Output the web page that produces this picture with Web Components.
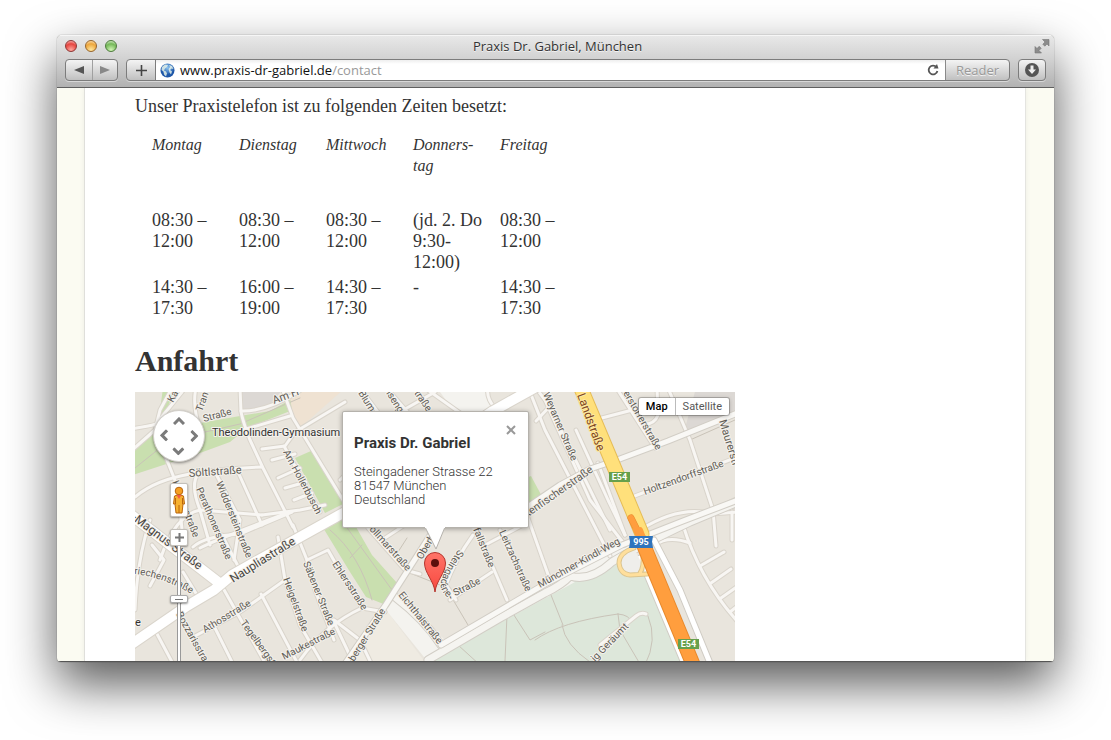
<!DOCTYPE html>
<html lang="de">
<head>
<meta charset="utf-8">
<title>Praxis Dr. Gabriel, München</title>
<style>
  html, body { margin: 0; height: 100%; background: #fff; overflow: hidden; }
  body { box-sizing: border-box; padding: 35px 57px 78px; display: flex; }
</style>
</head>
<body>
<browser-window>
  <window-titlebar slot="title">Praxis Dr. Gabriel, München</window-titlebar>
  <browser-toolbar slot="toolbar" host="www.praxis-dr-gabriel.de" path="/contact"></browser-toolbar>
  <contact-page>
    <p slot="intro">Unser Praxistelefon ist zu folgenden Zeiten besetzt:</p>
    <office-hours slot="hours"></office-hours>
    <span slot="heading">Anfahrt</span>
    <street-map slot="map">
      <map-pan slot="controls"></map-pan>
      <map-zoom slot="controls"></map-zoom>
      <map-types slot="types"></map-types>
      <map-info slot="info">
        <span slot="name">Praxis Dr. Gabriel</span>
        Steingadener Strasse 22<br>81547 München<br>Deutschland
      </map-info>
    </street-map>
  </contact-page>
</browser-window>

<script>
const define = (name, html, setup) => {
  const template = document.createElement('template');
  template.innerHTML = html;
  customElements.define(name, class extends HTMLElement {
    constructor() {
      super();
      this.attachShadow({ mode: 'open' }).append(template.content.cloneNode(true));
    }
    connectedCallback() { if (setup) setup(this, this.shadowRoot); }
  });
};

define('browser-window', `
<style>
  :host { flex: 1; min-width: 0; display: flex; flex-direction: column; border-radius: 5px 5px 4px 4px;
    box-shadow: 0 0 1px 0 rgba(0,0,0,.7), 0 22px 50px rgba(0,0,0,.66); background: #fbfbf2; overflow: hidden;
    font-family: "Open Sans", "Liberation Sans", sans-serif; }
  header { background: linear-gradient(#e9e9e9, #d2d2d2 45%, #b2b2b2); border-bottom: 1px solid #5f5f5f;
    box-shadow: inset 0 1px #f6f6f6; padding-bottom: 6px; }
  main { flex: 1; min-height: 0; overflow: hidden; display: flex; border-bottom: 1px solid #555; }
</style>
<header><slot name="title"></slot><slot name="toolbar"></slot></header>
<main><slot></slot></main>`);

define('window-titlebar', `
<style>
  :host { display: grid; grid-template-columns: 1fr auto 1fr; align-items: center; height: 22px; padding: 0 4px 2px 8px;
    font-size: 13px; color: #333; text-shadow: 0 1px #f4f4f4; }
  .lights { display: flex; gap: 8px; }
  button { appearance: none; width: 12px; height: 12px; padding: 0; border: 1px solid #7a4a40; border-radius: 50%; }
  .close { border-color: #8d3634; background: radial-gradient(circle at 50% 90%, #ffaaa0, #e6453f 60%, #f7aeac 90%); }
  .min { border-color: #96642a; background: radial-gradient(circle at 50% 90%, #ffe8a0, #eda63c 60%, #fbdcaa 90%); }
  .max { border-color: #4d7a3c; background: radial-gradient(circle at 50% 90%, #d4f7b8, #74b858 60%, #cfe9c0 90%); }
  svg { justify-self: end; display: block; }
</style>
<div class="lights">
  <button class="close" aria-label="Schließen"></button>
  <button class="min" aria-label="Minimieren"></button>
  <button class="max" aria-label="Maximieren"></button>
</div>
<span><slot></slot></span>
<svg width="16" height="16" viewBox="0 0 16 16" fill="#8c8c8c" stroke="#777" stroke-width=".6">
  <path d="M8.500 1.500H15V8l-2-2-2.200 2.200-2-2L11 4z"/><path d="M7.500 15H1V8.500l2 2 2.200-2.200 2 2L5 12.500z"/>
</svg>`);

define('browser-toolbar', `
<style>
  :host { display: flex; gap: 8px; padding: 0 8px; }
  button { appearance: none; margin: 0; padding: 0; border: 0; background: none; font: inherit; display: grid; place-items: center; }
  .group { display: flex; box-sizing: border-box; height: 22px; border: 1px solid #7c7c7c; border-radius: 4px;
    background: linear-gradient(#f4f4f4, #c0c0c0); box-shadow: 0 1px rgba(255,255,255,.45); overflow: hidden; }
  .nav button { width: 26px; }
  .nav button + button { border-left: 1px solid #a0a0a0; width: 25px; }
  .address { flex: 1; }
  .add { width: 29px; border-right: 1px solid #7c7c7c; }
  .field { flex: 1; display: flex; align-items: center; padding: 0 6px 0 4px; gap: 5px; background: linear-gradient(#eee, #fff 4px); }
  .url { flex: 1; font-size: 13px; line-height: 20px; color: #999; white-space: nowrap; outline: none; }
  .url b { font-weight: 400; color: #111; }
  .reader { width: 64px; border-left: 1px solid #8a8a8a; font-size: 13px; color: #999; text-shadow: 0 1px #f2f2f2; }
  .load button { width: 26px; }
  svg { display: block; }
</style>
<div class="group nav">
  <button aria-label="Zurück"><svg width="10" height="8"><path d="M10 0v8L0 4z" fill="#555"/></svg></button>
  <button aria-label="Vor"><svg width="10" height="8"><path d="M0 0v8l10-4z" fill="#888"/></svg></button>
</div>
<div class="group address">
  <button class="add" aria-label="Lesezeichen"><svg width="11" height="11"><path d="M5.500 0v11M0 5.500h11" stroke="#444" stroke-width="1.600"/></svg></button>
  <div class="field">
    <svg width="15" height="15" viewBox="0 0 15 15">
      <defs><radialGradient id="g" cy=".3"><stop offset="0" stop-color="#8cc4f2"/><stop offset="1" stop-color="#1d56a8"/></radialGradient></defs>
      <circle cx="7.500" cy="7.500" r="7" fill="url(#g)"/>
      <path d="M2 4l3-2.500 3 .5-1 2-2 1.500-1 2 2 1 1 2-1 3-2-2-.5-3L1.500 7zM9 2l3 1 1.500 3-2-.5L10 7l2 1.500-1 3-1.500-2L8.500 6 10 4z" fill="#e3f0e6" opacity=".85"/>
    </svg>
    <span class="url" role="textbox" aria-label="Adresse"><b></b><span></span></span>
    <svg width="12" height="12" viewBox="0 0 12 12"><path d="M9.500 3.200A4.400 4.400 0 1 0 10.400 7" fill="none" stroke="#555" stroke-width="1.800"/><path d="M6.500 4.500h5L10 0z" fill="#555"/></svg>
  </div>
  <button class="reader">Reader</button>
</div>
<div class="group load">
  <button aria-label="Downloads"><svg width="16" height="16" viewBox="0 0 16 16"><circle cx="8" cy="8" r="7" fill="#555"/><path d="M6.500 3.500h3v4H12l-4 4.500-4-4.500h2.500z" fill="#eee"/></svg></button>
</div>`, (el, root) => {
  root.querySelector('.url b').textContent = el.getAttribute('host');
  root.querySelector('.url span').textContent = el.getAttribute('path');
});

define('contact-page', `
<style>
  :host { flex: 1; margin: 0 28px 0 27px; padding: 8px 50px 0; border-left: 1px solid #dfdfdb; border-right: 1px solid #e4e4e0;
    background: #fff; box-shadow: 0 0 5px rgba(0,0,0,.06); color: #333;
    font: 18px/21px "Liberation Serif", serif; }
  ::slotted(p) { margin: 0 0 17px; }
  h2 { margin: 24px 0 13px; font-size: 30px; line-height: 36px; }
</style>
<slot name="intro"></slot>
<slot name="hours"></slot>
<h2><slot name="heading"></slot></h2>
<slot name="map"></slot>`);

define('office-hours', `
<style>
  :host { display: block; }
  table { border-collapse: collapse; table-layout: fixed; width: 435px; }
  th, td { padding: 0 0 4px 17px; text-align: left; vertical-align: top; font-weight: 400; }
  th { font-size: 16px; font-style: italic; padding-bottom: 34px; }
  tr:last-child td { padding-bottom: 0; }
</style>
<table>
  <thead><tr><th>Montag</th><th>Dienstag</th><th>Mittwoch</th><th>Donners-<br>tag</th><th>Freitag</th></tr></thead>
  <tbody>
    <tr><td>08:30 –<br>12:00</td><td>08:30 –<br>12:00</td><td>08:30 –<br>12:00</td><td>(jd. 2. Do<br>9:30-<br>12:00)</td><td>08:30 –<br>12:00</td></tr>
    <tr><td>14:30 –<br>17:30</td><td>16:00 –<br>19:00</td><td>14:30 –<br>17:30</td><td>-</td><td>14:30 –<br>17:30</td></tr>
  </tbody>
</table>`);

/* Streets are listed once and drawn twice: casing first, surface on top. */
const minor = [
  'M240 388L241 412Q243 422 250 440L263 468L293 527', 'M282 388L293 418L343 500',
  'M130 429Q150 426 156 424L182 392L186 386', 'M130 452L155 430L160 410L172 388',
  'M196 388Q192 405 200 430', 'M165 455L178 488L183 540', 'M135 497Q155 480 190 474T262 467',
  'M241 411Q265 412 298 392L306 386', 'M243 430L290 416', 'M345 402L295 432L285 446L262 449',
  'M295 454L272 460', 'M300 468L278 478', 'M306 482L285 488', 'M312 493L294 500',
  'M284 446L320 512', 'M198 474Q190 485 200 510L210 545', 'M215 472L240 520L234 560', 'M238 472L262 525',
  'M152 545L164 560L150 586', 'M150 520Q137 560 135 610', 'M160 560Q175 515 200 510L262 515', 'M200 548Q215 540 290 512',
  'M183 572L200 600', 'M193 547Q205 536 240 534L292 512', 'M262 515L300 510L325 505',
  'M232 575L240 570L222 535', 'M223 588L268 668', 'M195 636L240 612L285 580', 'M261 594L300 668', 'M278 537L285 580L300 625L325 668',
  'M293 525L307 560L315 590L334 640', 'M307 560L328 550L345 580L362 608L385 612', 'M156 632L172 662L160 668',
  'M215 628L235 668', 'M300 660Q325 625 362 608', 'M333 620L352 660', 'M372 665L360 640L334 620',
  'M340 480L360 460', 'M365 395L380 415', 'M390 392L410 415', 'M435 392L400 412L352 440', 'M425 388L470 420', 'M488 388Q486 398 495 408',
  'M368 528L405 570L420 574', 'M385 538L420 515', 'M473 535Q455 560 446 585L456 600',
  'M450 600L492 572', 'M475 525L507 600', 'M487 544L525 524', 'M500 530L532 595', 'M528 518L550 580',
  'M530 392L545 430L610 556', 'M536 421L552 404', 'M536 388L545 400L590 500L625 545', 'M545 398L610 530', 'M576 430L608 500L625 535',
  'M598 463L625 535', 'M598 419L640 408', 'M619 392L655 448', 'M657 388L658 415Q654 426 640 424', 'M668 388L690 440L713 510',
  'M632 497L735 458', 'M640 530Q680 505 712 514L740 505', 'M713 510L716 546', 'M712 514L740 512', 'M732 512L732 540',
  'M683 525Q700 580 738 622', 'M700 566L724 552', 'M711 583L731 569', 'M721 598L738 586', 'M730 612L740 604',
  'M655 545Q668 535 690 543', 'M645 545L738 498', 'M600 645L636 616Q641 612 646 614'
];
const ramps = ['M428 660L500 618L545 593Q562 585 570 576Q590 582 612 562Q635 548 690 522L738 502', 'M395 597Q425 620 441 645'];
const major = ['M120 652L187 606L214 590L232 575L300 537L345 512L493 411L545 382', 'M130 514L218 582'];
const middle = ['M342 668L385 606L440 520L465 480', 'M441 645L545 584L622 545L683 521L738 500', 'M520 512L560 485L590 469L617 460L668 441L740 412'];
const slips = ['M640 558L686 668', 'M654 540L680 590L712 668'];
const footways = ['M549 590L563 625', 'M535 640Q560 622 618 614', 'M562 625Q565 645 590 662', 'M618 614L620 630L640 664',
  'M618 614Q630 615 631 622', 'M648 616Q658 640 645 665',
  'M452 598L468 625', 'M410 573L440 585', 'M398 552L407 538', 'M505 661L507 615L512 612L530 640L545 632', 'M458 645L480 665',
  'M135 468L170 440L240 424L300 398', 'M330 530Q360 555 372 600', 'M345 525L392 590', 'M350 558L362 545', 'M690 440L735 420'];

/* [text, x, y, angle, style] */
const labels = [
  ['Ka', 173, 403, -62], ['Tran', 202, 412, -70], ['Straße', 204, 422, -15], ['Am H', 274, 404, -20, 'mid'],
  ['Theodolinden-Gymnasium', 212, 436, 0, 'mid poi'], ['Söltlstraße', 189, 477, -4, 'mid'], ['Am Hollerbusch', 283, 452, 62],
  ['Perathonerstraße', 196, 489, 67], ['Widdersteinstraße', 216, 483, 68], ['Kanderstraße', 172, 482, 69],
  ['-Magnus-Straße', 131, 519, 37, 'big'], ['e', 135, 626, 0, 'mid poi'], ['Naupliastraße', 233, 583, -32, 'big'],
  ['Athosstraße', 205, 633, -31], ['Bozzarisstra', 176, 614, 61], ['Tegelbergst', 240, 623, 54],
  ['Heigelstraße', 283, 579, 70], ['Säbener Straße', 303, 563, 68], ['Ehlersstraße', 332, 564, 57], ['Maukestraße', 284, 660, -27],
  ['Vollmarstraße', 365, 525, 48], ['Oberh', 422, 560, -60], ['r Straße', 450, 599, -27], ['Eichthalstraße', 398, 595, 51],
  ['berger Straße', 354, 662, -58], ['pfallstraße', 471, 524, 68], ['Leitzachstraße', 499, 532, 66], ['Blum', 358, 393, 58],
  ['isenga', 386, 393, 58], ['traße', 414, 393, 56], ['Weyarner Straße', 543, 394, 67], ['Landstraße', 577, 395, 70, 'route'],
  ['erstorferstraße', 623, 393, 60], ['Maurerstr', 719, 421, 73, 'mid'], ['Holtzendorffstraße', 645, 495, -20],
  ['kenfischerstraße', 527, 518, -35, 'mid'], ['Münchner-Kindl-Weg', 540, 588, -29], ['ig Geräumt', 595, 662, -46]
];
const paths = (list, cls) => list.map(d => `<path class="${cls}" d="${d}"/>`).join('');
const road = (list, name) => paths(list, name + ' case') + paths(list, name);

define('street-map', `
<style>
  :host { display: block; position: relative; max-width: 600px; height: 270px; overflow: hidden; background: #e9e5dd;
    font-family: Roboto, "Liberation Sans", sans-serif; }
  .tiles { display: block; width: 600px; height: 270px; }
  path { fill: none; stroke-linejoin: round; stroke-linecap: round; }
  .minor { stroke: #f8f6f3; stroke-width: 3; } .minor.case { stroke: #d9d4cb; stroke-width: 5; }
  .ramp { stroke: #f5f4f0; stroke-width: 7; } .ramp.case { stroke: #d2cec6; stroke-width: 9; }
  .middle { stroke: #f9f8f5; stroke-width: 5; } .middle.case { stroke: #d2cec6; stroke-width: 7; }
  .major { stroke: #fff; stroke-width: 10; } .major.case { stroke: #dad5cc; stroke-width: 12; }
  .slip { stroke: #fff; stroke-width: 5; } .slip.case { stroke: #d0ccc4; stroke-width: 7; }
  .foot { stroke: #c9c3b8; stroke-width: 1; }
  .park { fill: #c9dfaf; } .meadow { fill: #dde7da; } .pale { fill: #f4f3ef; } .sand { fill: #efebe2; } .school { fill: #efe2d2; } .block { fill: #dcd8d4; }
  text { font-size: 10px; fill: #605c55; stroke: #f4f1ec; stroke-width: 2px; paint-order: stroke; stroke-linejoin: round; }
  .mid { font-size: 11px; } .poi { fill: #333; } .big { font-size: 12px; fill: #4a4742; } .route { font-size: 12px; fill: #7d4520; stroke: #ffe9a0; }
  .shield { font-size: 9px; font-weight: 700; fill: #fff; stroke: none; text-anchor: middle; }
  .controls { position: absolute; left: 18px; top: 18px; display: flex; flex-direction: column; align-items: center; }
  .types { position: absolute; right: 6px; top: 6px; }
  .info { position: absolute; left: 207px; top: 19px; }
</style>
<svg class="tiles" viewBox="135 392 600 270" preserveAspectRatio="xMinYMin slice">
  <path class="park" d="M130 453L155 431L160 410L163 388H175L165 415L200 423L240 416L270 411L297 396L303 406L280 415L247 428L230 442L200 453L130 476z"/>
  <path class="park" d="M295 458L311 451L345 503L325 513z"/>
  <path class="park" d="M322 526L348 510L356 527L372 555L397 583L386 605L366 597L350 572z"/>
  <path class="park" d="M526 478L531 476L545 502L526 516z"/>
  <path class="school" d="M293 416L290 398L310 388H345L300 428z"/>
  <path class="block" d="M242 388H284L268 407L243 412z"/>
  <path class="block" d="M684 432L696 388H740V412z"/>
  <path class="pale" d="M440 392H488L494 408L460 420z"/>
  <path class="meadow" d="M425 664L450 650L545 597L568 580L590 580L616 557L630 575L646 575L684 664z"/>
  <path class="sand" d="M387 611L425 662H350z"/>
  <path class="pale" d="M396 597L445 640L560 577L575 582L428 662L386 610z"/>
  <path class="pale" d="M545 594L575 578Q590 585 612 562L645 548L640 540L560 575z"/>
  ${paths(footways, 'foot')}
  ${road(minor, 'minor')}${road(ramps, 'ramp')}${road(middle, 'middle')}${road(major, 'major')}${road(slips, 'slip')}
  <path d="M634 548Q619 553 619 563Q620 574 630 575L647 574M643 556Q644 567 640 573" style="fill:#efeeeb" stroke="#dcc58f" stroke-width="5"/>
  <path d="M634 548Q619 553 619 563Q620 574 630 575L647 574M643 556Q644 567 640 573" stroke="#ffdf9c" stroke-width="3"/>
  <path d="M580 386L612 462L642 534" stroke="#e6bd57" stroke-width="15"/>
  <path d="M580 386L612 462L642 534" stroke="#ffe07b" stroke-width="13"/>
  <path d="M631 518L640 536L697 674" stroke="#e8892c" stroke-width="7"/>
  <path d="M644 546L697 674" stroke="#e8892c" stroke-width="15"/>
  <path d="M631 518L640 536M636 530L644 546L697 674M640 530L645 543" stroke="#ff9e3e" stroke-width="6"/>
  <path d="M642 541L697 674" stroke="#ff9e3e" stroke-width="13"/>
  ${labels.map(([t, x, y, a, c]) => `<text class="${c || ''}" transform="translate(${x} ${y}) rotate(${a})">${t}</text>`).join('')}
  <defs>
    <path id="griechen" d="M134 574Q165 577 200 599"/>
    <path id="steingaden" d="M459 549Q436 580 442 590Q445 597 452 600"/>
  </defs>
  <text><textPath href="#griechen">riechenstraße</textPath></text>
  <text><textPath href="#steingaden">Steingadene</textPath></text>
  <rect x="609" y="472" width="21" height="10" fill="#67a04c"/><text class="shield" x="619.500" y="480">E54</text>
  <rect x="678" y="639" width="21" height="10" fill="#67a04c"/><text class="shield" x="688.500" y="647">E54</text>
  <path d="M629 536H653L652 542L653 548H629L630 542z" style="fill:#2f74bd"/><text class="shield" x="641" y="545">995</text>
</svg>
<div class="controls"><slot name="controls"></slot></div>
<div class="types"><slot name="types"></slot></div>
<div class="info"><slot name="info"></slot></div>`);

define('map-pan', `
<style>
  :host { display: grid; grid-template: repeat(3, 1fr) / repeat(3, 1fr); width: 46px; height: 46px; padding: 2px;
    margin-bottom: 21px; border-radius: 50%; background: #fff; border: 1px solid #d3d0ca; box-shadow: 0 1px 3px rgba(0,0,0,.45); }
  button { appearance: none; padding: 0; border: 0; background: none; display: grid; place-items: center; }
  .n { grid-area: 1 / 2; } .w { grid-area: 2 / 1; rotate: -90deg; } .e { grid-area: 2 / 3; rotate: 90deg; } .s { grid-area: 3 / 2; rotate: 180deg; }
  path { fill: none; stroke: #7b7b7b; stroke-width: 3; }
</style>
${['n|Norden', 'w|Westen', 'e|Osten', 's|Süden'].map(s => s.split('|')).map(([c, l]) =>
  `<button class="${c}" aria-label="${l}"><svg width="12" height="8"><path d="M1 7l5-5 5 5"/></svg></button>`).join('')}`);

define('map-zoom', `
<style>
  :host { display: flex; flex-direction: column; align-items: center; }
  button { appearance: none; box-sizing: border-box; width: 18px; padding: 0; border: 1px solid #c3c0ba; border-radius: 2px;
    background: #fff; box-shadow: 0 1px 2px rgba(0,0,0,.4); display: grid; place-items: center; }
  .pegman { height: 34px; margin-bottom: 12px; }
  .plus { height: 17px; }
  input { appearance: none; writing-mode: vertical-lr; width: 18px; height: 115px; margin: 0; background:
    linear-gradient(90deg, transparent 7px, #999 7px 8px, #fff 8px 10px, #999 10px 11px, transparent 11px); }
  input::-webkit-slider-thumb { appearance: none; box-sizing: border-box; width: 18px; height: 8px; border: 1px solid #aaa; border-radius: 2px;
    background: linear-gradient(#777, #777) center / 8px 1px no-repeat #fff; box-shadow: 0 1px 2px rgba(0,0,0,.4); }
</style>
<button class="pegman" aria-label="Street View"><svg width="14" height="30" viewBox="0 0 14 30" stroke="#b9650d" stroke-width="1">
  <path d="M2.500 11Q7 8 11.500 11L12.500 19H11L10 28H4L3 19H1.500z" fill="#f7b131"/><path d="M7 20v8M3.500 13v6M10.500 13v6" fill="none"/>
  <path d="M4.500 10h5L7 14z" fill="#f55a4a" stroke="none"/><circle cx="7" cy="6" r="3.800" fill="#f59f22"/></svg></button>
<button class="plus" aria-label="Vergrößern"><svg width="9" height="9"><path d="M4.500 0v9M0 4.500h9" stroke="#777" stroke-width="2"/></svg></button>
<input type="range" min="0" max="107" value="49" aria-label="Zoomstufe">`);

define('map-types', `
<style>
  :host { display: flex; border-radius: 2px; background: #fff; box-shadow: 0 0 0 1px rgba(0,0,0,.2), 0 1px 4px rgba(0,0,0,.3); }
  button { appearance: none; margin: 0; padding: 0 7px; height: 17px; border: 0; background: none; font: 11px/17px Roboto, sans-serif; color: #565656; }
  button[aria-pressed=true] { font-weight: 500; color: #000; }
  button + button { border-left: 1px solid #bbb; }
</style>
<button aria-pressed="true">Map</button><button aria-pressed="false">Satellite</button>`);

define('map-info', `
<style>
  :host { display: block; position: relative; box-sizing: border-box; width: 187px; height: 117px; padding: 22px 11px; border: 1px solid #b5b2ac; border-radius: 2px;
    background: #fff; box-shadow: 0 1px 5px rgba(0,0,0,.35); font: 300 13px/14px Roboto, sans-serif; color: #333; white-space: nowrap; }
  strong { display: block; margin-bottom: 13px; font-size: 15px; line-height: 18px; font-weight: 700; }
  button { appearance: none; position: absolute; right: 12px; top: 13px; padding: 0; border: 0; background: none; }
  .tail, .pin { position: absolute; display: block; }
  .tail { left: 81px; top: 115px; } .pin { left: 80px; top: 139px; }
  svg { display: block; }
</style>
<strong><slot name="name"></slot></strong>
<slot></slot>
<button aria-label="Schließen"><svg width="10" height="10"><path d="M1 1l8 8M9 1l-8 8" stroke="#999" stroke-width="2"/></svg></button>
<svg class="tail" width="24" height="24"><path d="M1 0L12 22L21 0" fill="#fff" stroke="#b5b2ac"/><path d="M1 0H21" stroke="#fff" stroke-width="2"/></svg>
<svg class="pin" width="24" height="42" viewBox="0 0 24 42">
  <defs><linearGradient id="p" x2="0" y2="1"><stop offset="0" stop-color="#ff7468"/><stop offset="1" stop-color="#f8483f"/></linearGradient></defs>
  <path d="M12 41C11 30 1.500 22 1.500 12A10.500 10.500 0 0 1 22.500 12C22.500 22 13 30 12 41z" fill="url(#p)" stroke="#b5352d"/>
  <circle cx="12" cy="12" r="4" fill="#5c0f0c"/></svg>`);
</script>
</body>
</html>
